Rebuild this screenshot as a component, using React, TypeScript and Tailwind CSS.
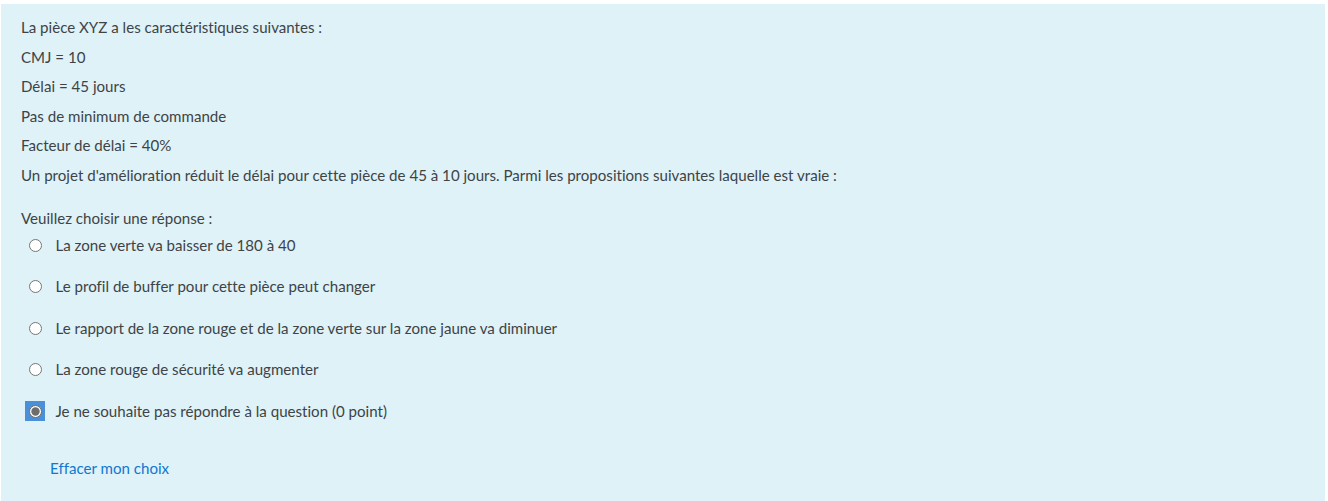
const lines = [
  'La pièce XYZ a les caractéristiques suivantes :',
  'CMJ = 10',
  'Délai = 45 jours',
  'Pas de minimum de commande',
  'Facteur de délai = 40%',
  "Un projet d'amélioration réduit le délai pour cette pièce de 45 à 10 jours. Parmi les propositions suivantes laquelle est vraie :",
]

const options = [
  'La zone verte va baisser de 180 à 40',
  'Le profil de buffer pour cette pièce peut changer',
  'Le rapport de la zone rouge et de la zone verte sur la zone jaune va diminuer',
  'La zone rouge de sécurité va augmenter',
  'Je ne souhaite pas répondre à la question (0 point)',
]

const Radio = ({ checked }: { checked: boolean }) => {
  if (checked) {
    return (
      <div className="flex items-center justify-center w-[20px] h-[20px] bg-[#4a90d9] -ml-[3.5px] -mr-[3.5px]">
        <svg width="13" height="13" viewBox="0 0 13 13">
          <circle cx="6.5" cy="6.5" r="6" fill="#ffffff" stroke="#6d6d6d" />
          <circle cx="6.5" cy="6.5" r="4.2" fill="#6d6d6d" />
        </svg>
      </div>
    )
  }
  return (
    <svg width="13" height="13" viewBox="0 0 13 13">
      <circle cx="6.5" cy="6.5" r="6" fill="#ffffff" stroke="#767676" />
    </svg>
  )
}

export default function App() {
  return (
    <div
      className="bg-white pt-[4px] pl-[1px] pr-[3px] text-[15.1px] text-[#404346] [font-variant-ligatures:none]"
      style={{ fontFamily: '"Segoe UI", Lato, "Liberation Sans", sans-serif' }}
    >
      <div className="bg-[#def2f8] pt-[13px] px-[20px] pb-[32px]">
        {lines.map((l) => (
          <p key={l} className="leading-[21px] mb-[8.5px]">
            {l}
          </p>
        ))}
        <p className="leading-[21px] mt-[22px]">Veuillez choisir une réponse :</p>
        <div className="flex flex-col mt-[6px]">
          {options.map((o, i) => (
            <label key={o} className="flex items-start h-[41.5px] pl-[7.5px]">
              <div className="h-[21px] flex items-center">
                <Radio checked={i === options.length - 1} />
              </div>
              <span className="leading-[21px] ml-[14px]">{o}</span>
            </label>
          ))}
        </div>
        <a href="#" className="block leading-[21px] mt-[15.5px] ml-[29px] text-[#1177d1]">
          Effacer mon choix
        </a>
      </div>
    </div>
  )
}
